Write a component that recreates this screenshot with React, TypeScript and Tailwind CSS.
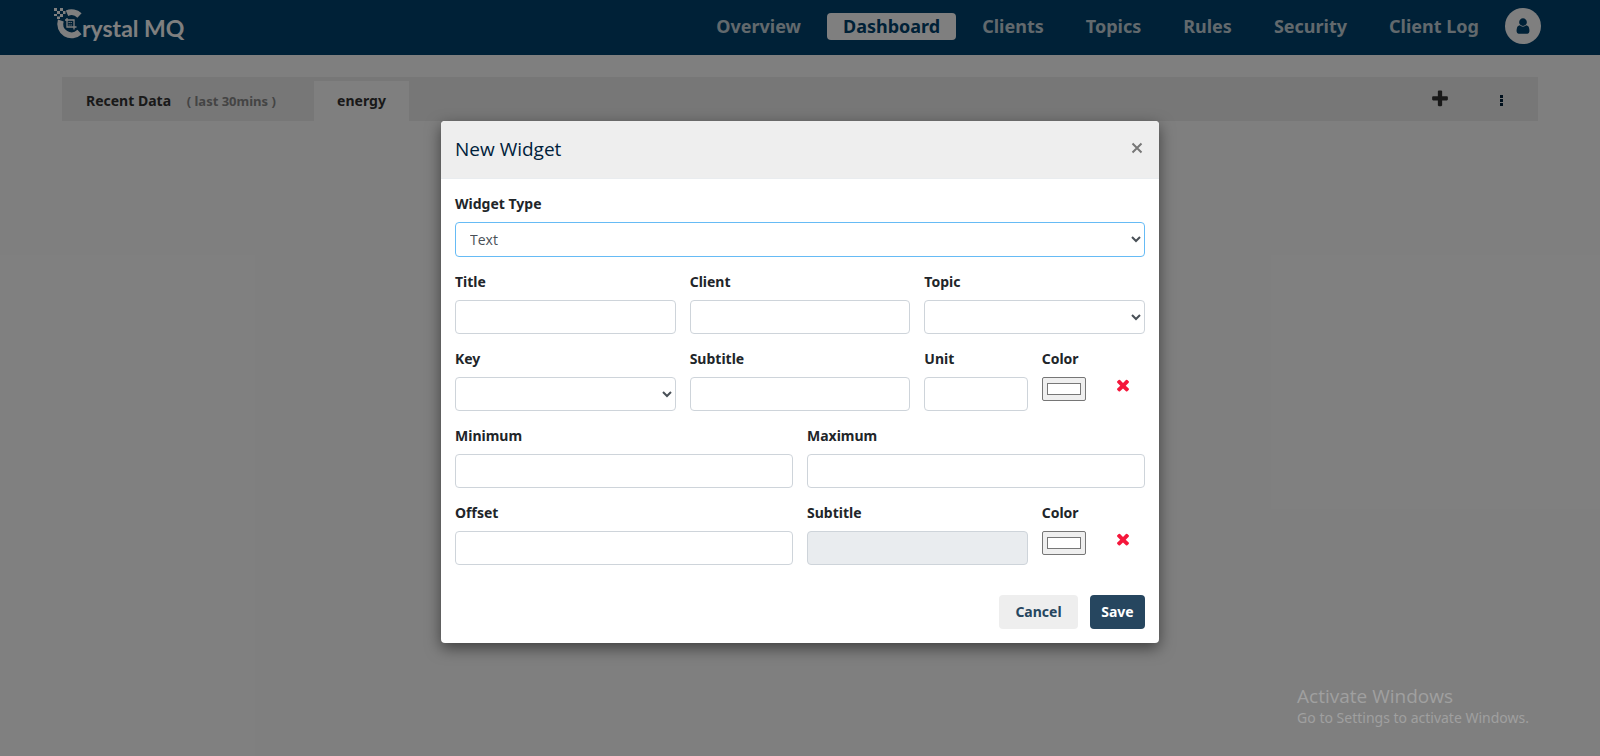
import React from 'react';

const navItems = ['Overview', 'Dashboard', 'Clients', 'Topics', 'Rules', 'Security', 'Client Log'];

const icons = {
  plus: 'M1600 736v192q0 40-28 68t-68 28h-416v416q0 40-28 68t-68 28h-192q-40 0-68-28t-28-68v-416h-416q-40 0-68-28t-28-68v-192q0-40 28-68t68-28h416v-416q0-40 28-68t68-28h192q40 0 68 28t28 68v416h416q40 0 68 28t28 68z',
  times:
    'M1490 1322q0 40-28 68l-136 136q-28 28-68 28t-68-28l-294-294-294 294q-28 28-68 28t-68-28l-136-136q-28-28-28-68t28-68l294-294-294-294q-28-28-28-68t28-68l136-136q28-28 68-28t68 28l294 294 294-294q28-28 68-28t68 28l136 136q28 28 28 68t-28 68l-294 294 294 294q28 28 28 68z',
  user: 'M1536 1399q0 109-62.5 187t-150.5 78h-854q-88 0-150.5-78t-62.5-187q0-85 8.5-160.5t31.5-152 58.5-131 94-89 134.5-34.5q131 128 313 128t313-128q76 0 134.5 34.5t94 89 58.5 131 31.5 152 8.5 160.5zm-256-887q0 159-112.5 271.5t-271.5 112.5-271.5-112.5-112.5-271.5 112.5-271.5 271.5-112.5 271.5 112.5 112.5 271.5z'
};

const Icon: React.FC<{ name: keyof typeof icons; size: number }> = ({ name, size }) => (
  <svg width={size} height={size} viewBox="0 0 1792 1792" fill="currentColor" aria-hidden="true">
    <path d={icons[name]} />
  </svg>
);

const inputClass =
  "block w-full h-[34px] px-[10px] rounded border border-[#ced4da] bg-white font-['Open_Sans',sans-serif] text-sm text-[#495057] outline-none focus:border-[#66bbf5]";

const colorClass = 'block h-6 w-full rounded-xs border border-[#767676] bg-[#efefef] px-[2px] py-px';

const removeClass = 'col-span-1 mt-7 flex h-[18px] justify-center text-[#f5173b]';

interface FieldProps {
  id: string;
  label: string;
  className?: string;
  children: React.ReactNode;
}

const Field: React.FC<FieldProps> = ({ id, label, className, children }) => (
  <div className={className}>
    <label htmlFor={id} className="block mb-[7px] text-sm leading-[22px] font-bold text-[#212529] whitespace-nowrap">
      {label}
    </label>
    {children}
  </div>
);

const Logo: React.FC = () => (
  <a href="#" aria-label="Crystal MQ" className="flex items-start text-white">
    <svg width="28" height="34" viewBox="0 0 28 34" fill="currentColor" aria-hidden="true">
      <path d="M0 0h3v3H0zM6 0h3v3H6zM3 3h3v3H3zM9 3h2.5v3H9zM0 6h3v2H0zM6 6h3v3H6zM3 8.5h3V11H3z" />
      <path
        d="M25.500 7.500A11.300 11.300 0 0 0 13 5.200M6.800 12.500A11.300 11.300 0 0 0 25.500 24"
        fill="none"
        stroke="currentColor"
        strokeWidth="6"
      />
      <path d="M11 12h9v9.500M13 10v9h9.500" fill="none" stroke="currentColor" strokeWidth="1.300" />
      <path d="M14.500 14.500h4M14.500 17h4" fill="none" stroke="currentColor" strokeWidth="1" strokeDasharray="1.300 0.700" />
    </svg>
    <span className="font-['Lato','Open_Sans',sans-serif] text-[23px] leading-10 font-bold">rystal MQ</span>
  </a>
);

const NewWidgetDialog: React.FC = () => (
  <div
    role="dialog"
    aria-labelledby="dialog-title"
    className="w-full max-w-[718px] overflow-hidden rounded bg-white shadow-[0_5px_15px_rgba(0,0,0,0.5)]"
  >
    <div className="flex items-start justify-between border-b border-[#e9ecef] bg-[#eeeeee] p-[14px]">
      <h4 id="dialog-title" className="font-['Open_Sans',sans-serif] text-[19px] leading-[29px] text-[#00213b]">
        New Widget
      </h4>
      <button aria-label="Close" className="mt-[7px] px-[2px] text-[#777777]">
        <svg width="12" height="12" viewBox="0 0 12 12" fill="none" stroke="currentColor" strokeWidth="2">
          <path d="M1.500 1.500l9 9M10.500 1.500l-9 9" />
        </svg>
      </button>
    </div>

    <form className="p-[14px]" onSubmit={(e) => e.preventDefault()}>
      <div className="grid grid-cols-12 gap-[14px]">
        <Field id="type" label="Widget Type" className="col-span-12">
          <select
            id="type"
            className="block w-full h-[35px] px-[10px] rounded border border-[#66bbf5] bg-white font-['Open_Sans',sans-serif] text-sm text-[#495057] outline-none"
          >
            <option>Text</option>
          </select>
        </Field>

        <Field id="title" label="Title" className="col-span-4">
          <input id="title" type="text" className={inputClass} />
        </Field>
        <Field id="client" label="Client" className="col-span-4">
          <input id="client" type="text" className={inputClass} />
        </Field>
        <Field id="topic" label="Topic" className="col-span-4">
          <select id="topic" className={inputClass} />
        </Field>

        <Field id="key" label="Key" className="col-span-4">
          <select id="key" className={inputClass} />
        </Field>
        <Field id="subtitle" label="Subtitle" className="col-span-4">
          <input id="subtitle" type="text" className={inputClass} />
        </Field>
        <Field id="unit" label="Unit" className="col-span-2">
          <input id="unit" type="text" className={inputClass} />
        </Field>
        <Field id="color" label="Color" className="col-span-1">
          <input id="color" type="color" defaultValue="#ffffff" className={colorClass} />
        </Field>
        <button type="button" aria-label="Remove key" className={removeClass}>
          <Icon name="times" size={18} />
        </button>

        <Field id="minimum" label="Minimum" className="col-span-6">
          <input id="minimum" type="text" className={inputClass} />
        </Field>
        <Field id="maximum" label="Maximum" className="col-span-6">
          <input id="maximum" type="text" className={inputClass} />
        </Field>

        <Field id="offset" label="Offset" className="col-span-6">
          <input id="offset" type="text" className={inputClass} />
        </Field>
        <Field id="offset-subtitle" label="Subtitle" className="col-span-4">
          <input
            id="offset-subtitle"
            type="text"
            disabled
            className="block w-full h-[34px] px-[10px] rounded border border-[#ced4da] bg-[#e9ecef] text-sm"
          />
        </Field>
        <Field id="offset-color" label="Color" className="col-span-1">
          <input id="offset-color" type="color" defaultValue="#ffffff" className={colorClass} />
        </Field>
        <button type="button" aria-label="Remove offset" className={removeClass}>
          <Icon name="times" size={18} />
        </button>
      </div>

      <div className="mt-[30px] flex justify-end gap-3">
        <button type="button" className="h-[34px] min-w-[79px] rounded bg-[#eeeeee] px-[10px] text-sm font-bold text-[#26465f]">
          Cancel
        </button>
        <button type="submit" className="h-[34px] min-w-[55px] rounded bg-[#26465f] px-[10px] text-sm font-bold text-white">
          Save
        </button>
      </div>
    </form>
  </div>
);

export default function App() {
  return (
    <div className="relative min-h-screen bg-white font-['Noto_Sans','Open_Sans',sans-serif]">
      <header className="flex h-[55px] items-start justify-between bg-[#00426e] pl-[54px] pr-[59px] pt-2">
        <Logo />
        <nav className="flex items-center gap-[10px]">
          {navItems.map((item) => (
            <a
              key={item}
              href="#"
              className={`rounded px-4 text-lg leading-[27px] font-bold ${
                item === 'Dashboard' ? 'bg-white text-[#00426e]' : 'text-[#c4d3da]'
              }`}
            >
              {item}
            </a>
          ))}
          <button aria-label="Account" className="flex h-9 w-9 items-center justify-center rounded-full bg-white text-[#00426e]">
            <Icon name="user" size={18} />
          </button>
        </nav>
      </header>

      <main className="px-[62px] pt-[22px]">
        <div className="flex h-11 items-end bg-[#eeeeee] text-[#333333]">
          <button className="h-10 min-w-[252px] px-6 text-left text-sm font-bold">
            Recent Data <span className="ml-3 text-[13px] text-[#888888]">( last 30mins )</span>
          </button>
          <button className="h-10 min-w-[95px] bg-white px-5 text-sm font-bold">energy</button>
          <div className="ml-auto flex h-11 items-center gap-[50px] pr-[34px]">
            <button aria-label="Add widget">
              <Icon name="plus" size={20} />
            </button>
            <button aria-label="More options" className="pt-[3px] text-[#00213b]">
              <svg width="4" height="11" viewBox="0 0 4 11" fill="currentColor">
                <path d="M0 0h3v3H0zM0 4h3v3H0zM0 8h3v3H0z" />
              </svg>
            </button>
          </div>
        </div>
      </main>

      <div className="absolute inset-0 flex items-start justify-center bg-black/50 pt-[121px]">
        <NewWidgetDialog />
      </div>

      <div className="absolute right-[71px] bottom-7 text-[#a0a0a0]">
        <p className="font-['Open_Sans',sans-serif] text-[19px] leading-6">Activate Windows</p>
        <p className="text-sm leading-5">Go to Settings to activate Windows.</p>
      </div>
    </div>
  );
}
